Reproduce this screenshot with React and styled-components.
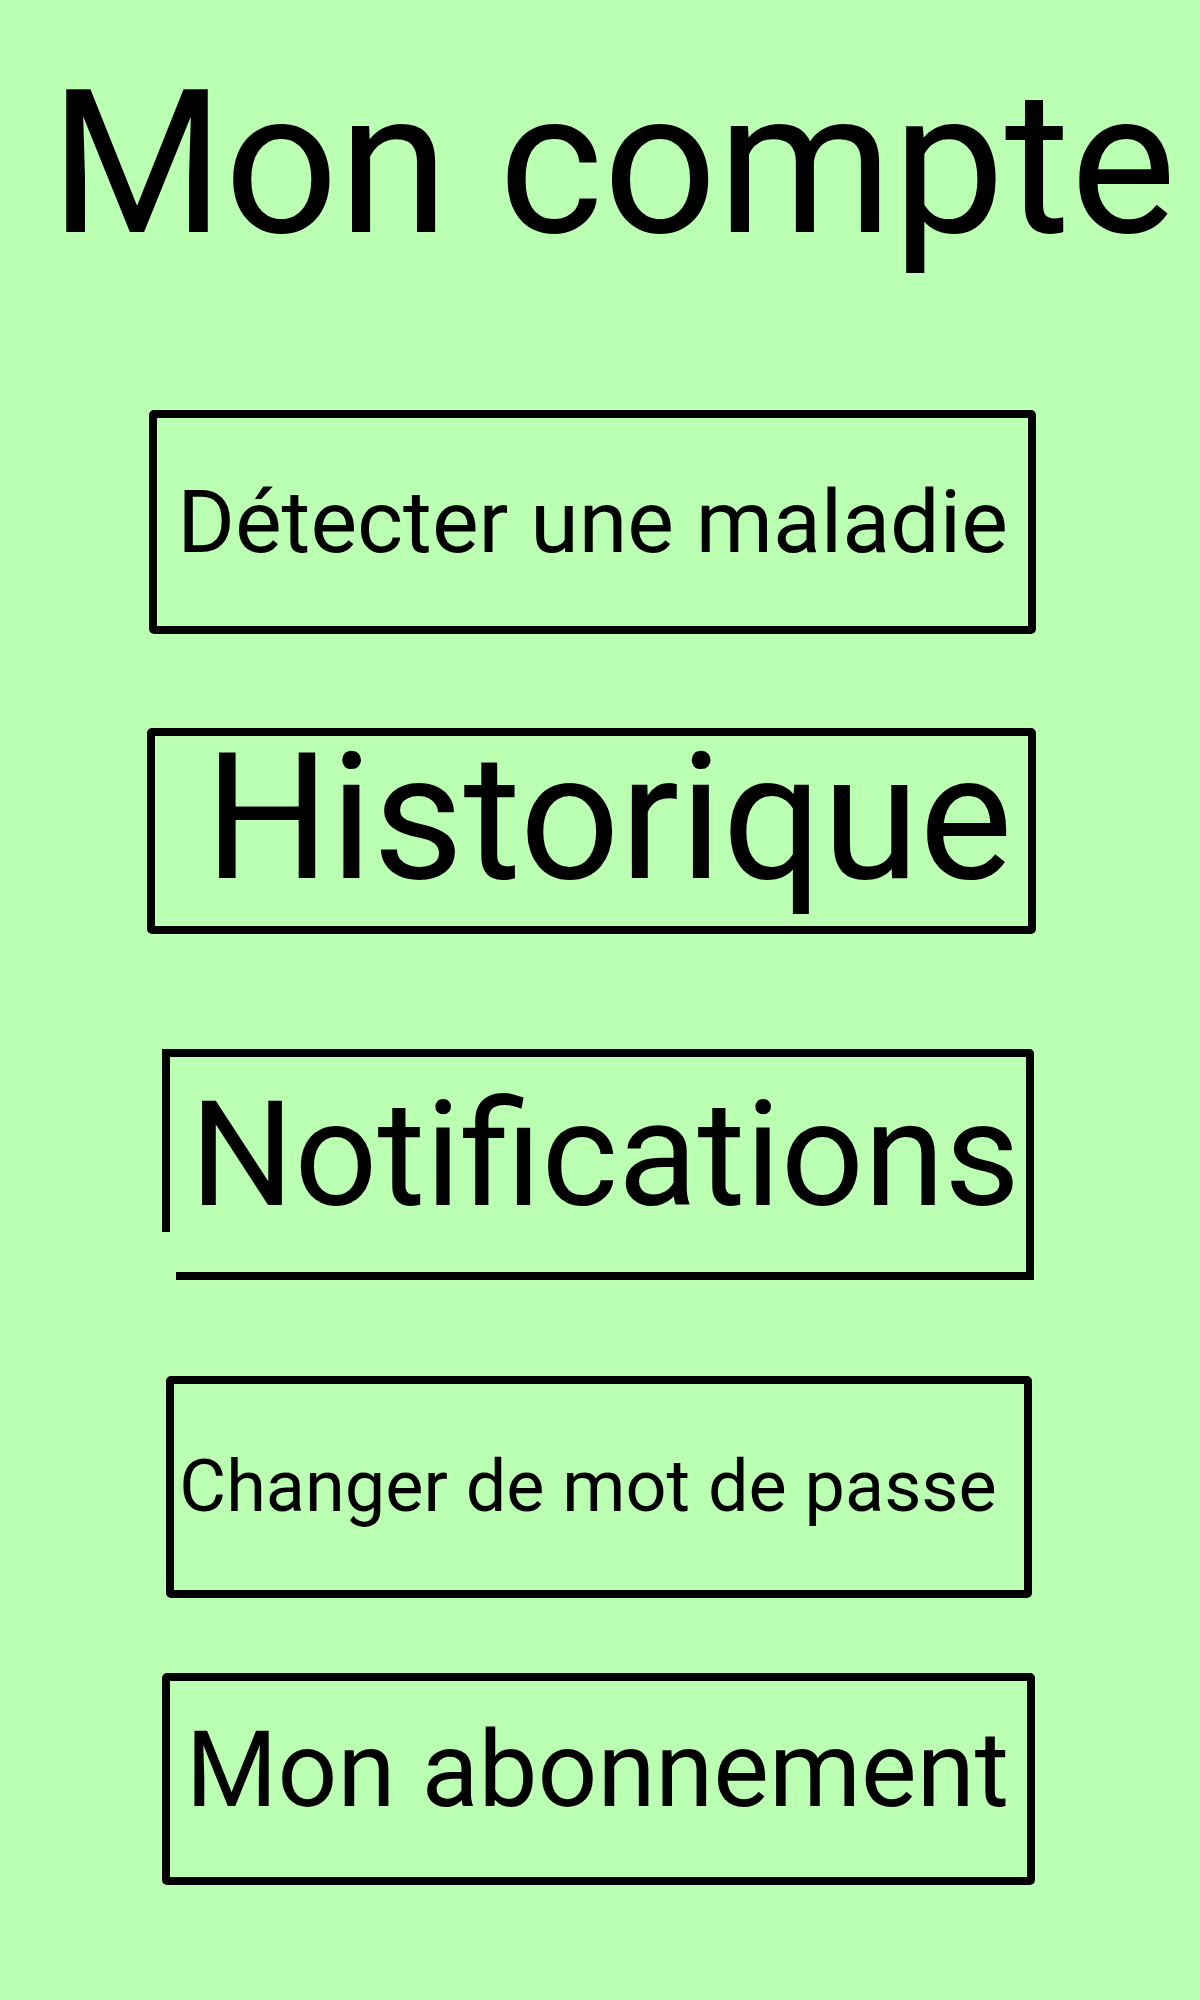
import React from 'react'
import styled, { createGlobalStyle } from 'styled-components'

const GlobalStyle = createGlobalStyle`
  html, body {
    margin: 0;
    padding: 0;
    background-color: #bbffb3;
  }
  body {
    font-family: Roboto, "Liberation Sans", sans-serif;
    color: #000;
  }
`;

const Page = styled.div`
  display: flex;
  flex-direction: column;
  align-items: flex-start;
  min-height: 2000px;
  padding-top: 64px;
  box-sizing: border-box;
`;

const Title = styled.h1`
  margin: 0 0 146px 0;
  width: 100%;
  padding-left: 26px;
  box-sizing: border-box;
  text-align: center;
  font-size: 200px;
  font-weight: 400;
  line-height: 1;
  white-space: nowrap;
`;

const MenuButton = styled.div`
  position: relative;
  display: flex;
  align-items: center;
  justify-content: center;
  box-sizing: border-box;
  width: ${p => p.w}px;
  height: ${p => p.h}px;
  margin-top: ${p => p.top}px;
  margin-left: ${p => p.left}px;
  padding-bottom: ${p => p.lift || 0}px;
  padding-left: ${p => p.padL || 0}px;
  padding-right: ${p => p.padR || 0}px;
  border: 8px solid #000;
  border-radius: 5px;
  font-size: ${p => p.size}px;
  line-height: 1;
  white-space: nowrap;
  cursor: pointer;
`;

// la bordure de "Notifications" est cassée en bas à gauche
const BrokenButton = styled(MenuButton)`
  border-left: none;
  border-bottom: none;
  border-radius: 0 5px 0 0;

  &::before {
    content: "";
    position: absolute;
    left: 0;
    top: -8px;
    width: 8px;
    height: 183px;
    background: #000;
    border-top-left-radius: 5px;
  }

  &::after {
    content: "";
    position: absolute;
    left: 14px;
    right: -8px;
    bottom: 0;
    height: 8px;
    background: #000;
    border-bottom-right-radius: 5px;
  }
`;

const Label = styled.span`
  display: block;
`;

const items = [
  { label: 'Détecter une maladie', w: 887, h: 224, top: 0, left: 149, size: 88 },
  { label: 'Historique', w: 889, h: 206, top: 94, left: 147, size: 176, lift: 26, padL: 34 },
  { label: 'Notifications', w: 872, h: 231, top: 115, left: 162, size: 146, lift: 26, padL: 22 },
  { label: 'Changer de mot de passe', w: 866, h: 222, top: 96, left: 166, size: 72, padR: 22 },
  { label: 'Mon abonnement', w: 873, h: 212, top: 75, left: 162, size: 105, lift: 18, padR: 2 },
];

export default function App() {
  return (
    <>
      <GlobalStyle />
      <Page>
        <Title>Mon compte</Title>
        {items.map((it) => {
          const Btn = it.label === 'Notifications' ? BrokenButton : MenuButton;
          return (
            <Btn
              key={it.label}
              w={it.w}
              h={it.h}
              top={it.top}
              left={it.left}
              size={it.size}
              lift={it.lift}
              padL={it.padL}
              padR={it.padR}
            >
              <Label>{it.label}</Label>
            </Btn>
          );
        })}
      </Page>
    </>
  );
}
